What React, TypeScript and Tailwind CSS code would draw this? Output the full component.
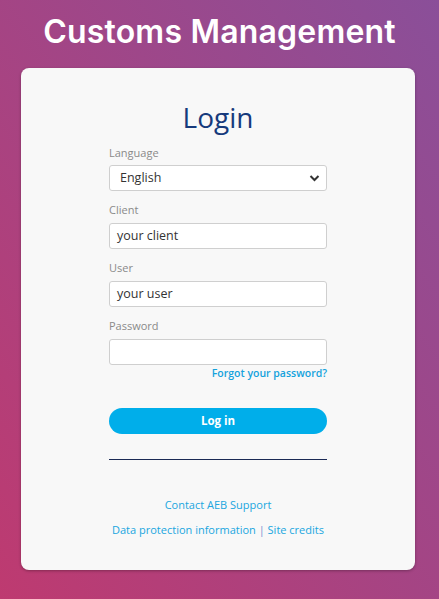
import React from "react";

export default function App() {
  return (
    <div
      className="w-[439px] h-[599px] overflow-hidden flex flex-col items-center bg-[linear-gradient(to_top_right,#be3a70,#8a4f99)]"
      style={{ fontFamily: '"Open Sans", sans-serif' }}
    >
      <h1
        className="mt-[11px] h-[42px] text-white text-[32px] leading-[42px] font-semibold tracking-[0.2px]"
        style={{ fontFamily: 'Inter, sans-serif' }}
      >
        Customs Management
      </h1>
      <div className="mt-[15px] self-start ml-[21px] w-[394px] h-[502px] bg-[#f8f8f8] rounded-[8px] shadow-[0_1px_3px_rgba(0,0,0,0.3)] flex flex-col items-center">
        <div className="mt-[30px] h-[38px] text-[28px] leading-[38px] text-[#163a7c]">Login</div>
        <div className="w-[218px] mt-[10px] flex flex-col">
          <label className="text-[11px] leading-[14px] text-[#8a8a8a] h-[14px]">Language</label>
          <div className="mt-[5px] h-[26px] border border-[#cfcfcf] rounded-[3px] bg-white flex items-center justify-between px-[10px]">
            <span className="text-[12.5px] text-[#333]">English</span>
            <svg width="11" height="8" viewBox="0 0 11 8" className="mr-[-4px]">
              <path d="M1.5 2 L5.5 6 L9.5 2" stroke="#333" strokeWidth="2" fill="none" />
            </svg>
          </div>
          <label className="mt-[12px] text-[11px] leading-[14px] text-[#8a8a8a] h-[14px]">Client</label>
          <div className="mt-[6px] h-[26px] border border-[#cfcfcf] rounded-[3px] bg-white flex items-center px-[7px]">
            <span className="text-[12.5px] text-[#333]">your client</span>
          </div>
          <label className="mt-[12px] text-[11px] leading-[14px] text-[#8a8a8a] h-[14px]">User</label>
          <div className="mt-[6px] h-[26px] border border-[#cfcfcf] rounded-[3px] bg-white flex items-center px-[7px]">
            <span className="text-[12.5px] text-[#333]">your user</span>
          </div>
          <label className="mt-[12px] text-[11px] leading-[14px] text-[#8a8a8a] h-[14px]">Password</label>
          <div className="mt-[6px] h-[26px] border border-[#cfcfcf] rounded-[3px] bg-white" />
          <div className="mt-[1px] text-right text-[10.5px] leading-[14px] font-semibold text-[#14a2dc]">
            Forgot your password?
          </div>
          <button className="mt-[28px] h-[26px] rounded-full bg-[#00aeea] text-white text-[11.5px] font-bold">
            Log in
          </button>
          <div className="mt-[25px] h-px bg-[#1b2a55]" />
          <div className="mt-[38px] text-center text-[11px] leading-[14px] text-[#20a6df]">Contact AEB Support</div>
          <div className="mt-[11px] text-center text-[11px] leading-[14px] text-[#20a6df] whitespace-nowrap">
            Data protection information <span className="text-[#7a8fd0]">|</span> Site credits
          </div>
        </div>
      </div>
    </div>
  );
}
